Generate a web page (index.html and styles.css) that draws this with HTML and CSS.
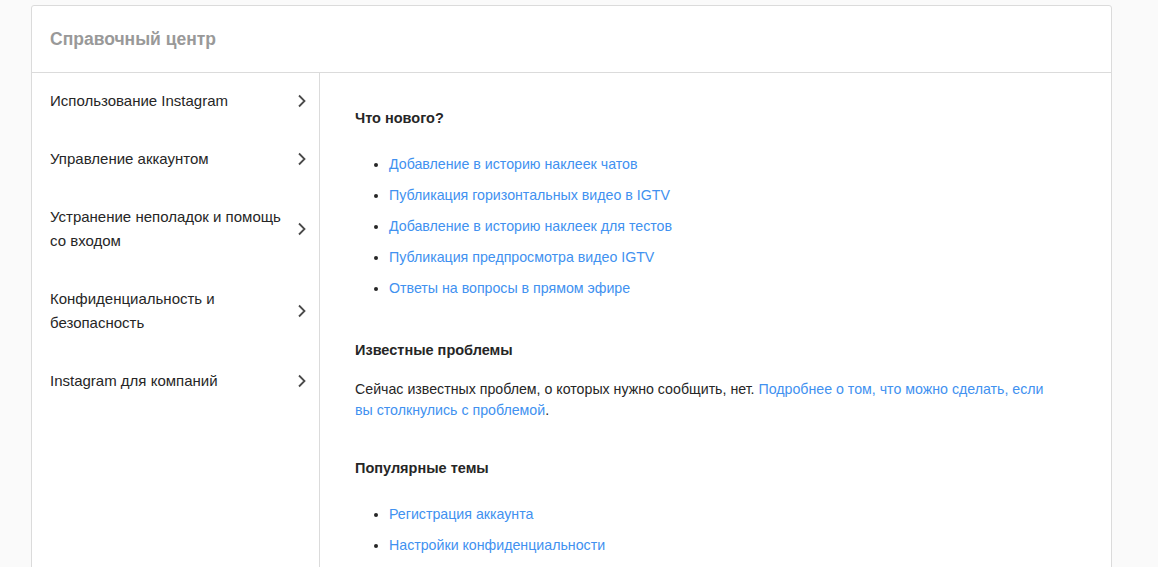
FILE: index.html
```html
<!DOCTYPE html>
<html lang="ru">
<head>
<meta charset="utf-8">
<title>Справочный центр</title>
<link rel="stylesheet" href="styles.css">
</head>
<body>
<div class="card">
  <header class="card-header">
    <h1 class="title">Справочный центр</h1>
  </header>
  <div class="card-body">
    <nav class="sidebar">
      <a class="nav-item" href="#"><span class="nav-text">Использование Instagram</span><svg class="chev" width="10" height="14" viewBox="0 0 10 14"><polyline points="2,1.5 7.5,7 2,12.5" fill="none" stroke="#4a4a4a" stroke-width="1.8"/></svg></a>
      <a class="nav-item" href="#"><span class="nav-text">Управление аккаунтом</span><svg class="chev" width="10" height="14" viewBox="0 0 10 14"><polyline points="2,1.5 7.5,7 2,12.5" fill="none" stroke="#4a4a4a" stroke-width="1.8"/></svg></a>
      <a class="nav-item" href="#"><span class="nav-text">Устранение неполадок и помощь со входом</span><svg class="chev" width="10" height="14" viewBox="0 0 10 14"><polyline points="2,1.5 7.5,7 2,12.5" fill="none" stroke="#4a4a4a" stroke-width="1.8"/></svg></a>
      <a class="nav-item" href="#"><span class="nav-text">Конфиденциальность и безопасность</span><svg class="chev" width="10" height="14" viewBox="0 0 10 14"><polyline points="2,1.5 7.5,7 2,12.5" fill="none" stroke="#4a4a4a" stroke-width="1.8"/></svg></a>
      <a class="nav-item" href="#"><span class="nav-text">Instagram для компаний</span><svg class="chev" width="10" height="14" viewBox="0 0 10 14"><polyline points="2,1.5 7.5,7 2,12.5" fill="none" stroke="#4a4a4a" stroke-width="1.8"/></svg></a>
    </nav>
    <main class="content">
      <section class="section">
        <h2 class="section-title">Что нового?</h2>
        <ul class="links">
          <li><a href="#">Добавление в историю наклеек чатов</a></li>
          <li><a href="#">Публикация горизонтальных видео в IGTV</a></li>
          <li><a href="#">Добавление в историю наклеек для тестов</a></li>
          <li><a href="#">Публикация предпросмотра видео IGTV</a></li>
          <li><a href="#">Ответы на вопросы в прямом эфире</a></li>
        </ul>
      </section>
      <section class="section">
        <h2 class="section-title">Известные проблемы</h2>
        <p class="text">Сейчас известных проблем, о которых нужно сообщить, нет. <a href="#">Подробнее о том, что можно сделать, если вы столкнулись с проблемой</a>.</p>
      </section>
      <section class="section">
        <h2 class="section-title">Популярные темы</h2>
        <ul class="links">
          <li><a href="#">Регистрация аккаунта</a></li>
          <li><a href="#">Настройки конфиденциальности</a></li>
        </ul>
      </section>
    </main>
  </div>
</div>
</body>
</html>
```

FILE: styles.css
```css
html, body {
  margin: 0;
  padding: 0;
  background: #fafafa;
  font-family: "Liberation Sans", Arial, sans-serif;
  color: #262626;
}

.card {
  margin: 5px 0 0 31px;
  width: 1079px;
  background: #fff;
  border: 1px solid #dbdbdb;
  border-radius: 3px 3px 0 0;
}

.card-header {
  height: 66px;
  border-bottom: 1px solid #dbdbdb;
  display: flex;
  align-items: center;
  padding-left: 18px;
}

.title {
  margin: 0;
  font-size: 17.5px;
  font-weight: bold;
  color: #999;
}

.card-body {
  display: flex;
  min-height: 520px;
}

.sidebar {
  width: 287px;
  flex: none;
  border-right: 1px solid #dbdbdb;
  display: flex;
  flex-direction: column;
}

.nav-item {
  display: flex;
  align-items: center;
  justify-content: space-between;
  padding: 16px 12px 18px 18px;
  text-decoration: none;
  color: #262626;
  font-size: 15px;
  line-height: 24px;
}

.nav-text {
  max-width: 245px;
}

.chev {
  flex: none;
}

.content {
  flex: 1;
  padding: 35px 60px 0 35px;
  display: flex;
  flex-direction: column;
  gap: 37px;
}

.section {
  display: flex;
  flex-direction: column;
}

.section-title {
  margin: 0;
  font-size: 14.5px;
  line-height: 21px;
  font-weight: bold;
  color: #262626;
}

.links {
  margin: 25px 0 0;
  padding: 0 0 4px 34px;
  display: flex;
  flex-direction: column;
  gap: 10px;
  font-size: 14.2px;
  line-height: 21px;
}

.links a, .text a {
  color: #4191f0;
  text-decoration: none;
}

.text {
  margin: 18px 0 0;
  font-size: 14.2px;
  line-height: 21px;
  max-width: 700px;
}
```
